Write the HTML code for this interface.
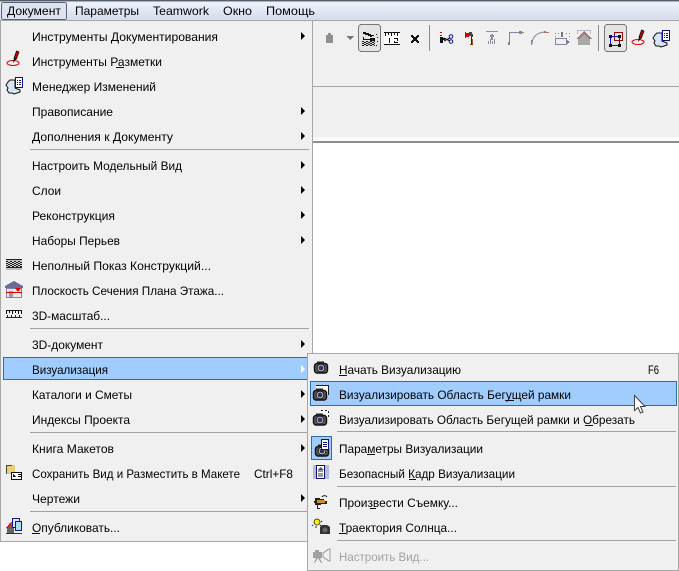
<!DOCTYPE html>
<html><head><meta charset="utf-8">
<style>
html,body{margin:0;padding:0;background:#fff;width:679px;height:571px;overflow:hidden}
svg{display:block}
text{font-family:"Liberation Sans","DejaVu Sans",sans-serif;font-size:12px;fill:#000}
.d{fill:#a2a2a2}
</style></head><body>
<svg width="679" height="571" viewBox="0 0 679 571" xmlns="http://www.w3.org/2000/svg" shape-rendering="crispEdges">
<defs>
<linearGradient id="bar" x1="0" y1="0" x2="0" y2="1"><stop offset="0" stop-color="#eef2fb"/><stop offset="1" stop-color="#d5dcef"/></linearGradient>
<pattern id="dith" width="4" height="2" patternUnits="userSpaceOnUse"><rect width="4" height="2" fill="#d0d0d0"/><rect x="0" y="0" width="2" height="1" fill="#222"/><rect x="2" y="1" width="2" height="1" fill="#222"/></pattern>
<g id="cam"><rect x="0.500" y="3.500" width="13" height="9.500" rx="2.500" fill="#555" stroke="#111" stroke-width="1.400" shape-rendering="auto"/><rect x="3" y="1.500" width="7" height="2.500" fill="#222"/><circle cx="7" cy="8" r="3.800" fill="#d8d8d8" stroke="#111" stroke-width=".8" shape-rendering="auto"/><circle cx="7" cy="8" r="2.500" fill="#2f3366" shape-rendering="auto"/></g>
<g id="note"><path d="M6 4h5v8l5 2v2l-3 1-3 1-2-1-3 0-2-3 1-2-2-3 2-3z" fill="#d6e6f8" stroke="#111" shape-rendering="auto"/><rect x="11" y="1" width="8" height="11" fill="#10107a"/><rect x="12" y="2" width="6" height="9" fill="#fff"/><path d="M13 4h1v1h-1zM15 4h2v1h-2zM13 6h1v1h-1zM15 6h2v1h-2zM13 8h1v1h-1zM15 8h2v1h-2z" fill="#10107a"/></g>
<g id="pen"><ellipse cx="7" cy="13" rx="6" ry="2.500" fill="none" stroke="#e00000" stroke-width="1" shape-rendering="auto"/><path d="M8 8l2.500-7 2.500 1-2.500 7z" fill="#c00000" stroke="#111" stroke-width=".7" shape-rendering="auto"/><path d="M8 8l-1 5 3.500-4z" fill="#111" shape-rendering="auto"/></g>
</defs>

<!-- top bar -->
<rect x="0" y="0" width="679" height="1" fill="#56606c"/>
<rect x="0" y="1" width="679" height="1" fill="#a8b0bc"/>
<rect x="0" y="2" width="679" height="18" fill="url(#bar)"/>
<rect x="0" y="20" width="679" height="1" fill="#a6a6a6"/>
<rect x="1.500" y="2.500" width="65" height="17" rx="2" fill="#dde3f1" stroke="#59626e"/>
<text x="7" y="15" textLength="54" lengthAdjust="spacingAndGlyphs">Документ</text>
<text x="75" y="15" textLength="64" lengthAdjust="spacingAndGlyphs">Параметры</text>
<text x="153" y="15" textLength="56" lengthAdjust="spacingAndGlyphs">Teamwork</text>
<text x="223" y="15" textLength="29" lengthAdjust="spacingAndGlyphs">Окно</text>
<text x="266" y="15" textLength="49" lengthAdjust="spacingAndGlyphs">Помощь</text>

<!-- toolbar -->
<rect x="313" y="21" width="366" height="116" fill="#f0f0f0"/>
<rect x="313" y="86" width="366" height="1" fill="#a8a8a8"/>
<rect x="313" y="137" width="366" height="4" fill="#fbfbfb"/>
<rect x="313" y="141" width="366" height="2" fill="#8e8e8e"/>

<path d="M328 33h3v2h2v8h-7v-8h2z" fill="#8f8f8f"/>
<path d="M346 36h8l-4 4z" fill="#777"/>
<rect x="358.500" y="24.500" width="22" height="27" rx="3" fill="#e4e4e4" stroke="#777"/>
<path d="M363 32h3v1h3v1h2v1h3v1h-2v1h-2v-1h-2v-1h-3v-1h-2zM363 37h1v2h6v1h-7zM370 38h5v4h-5zM376 34h1v1h-1zM377 37h1v1h-1zM377 41h1v1h-1zM376 45h1v1h-1z" fill="#111"/>
<rect x="362" y="41" width="13" height="5" fill="url(#dith)"/>
<rect x="384" y="32" width="16" height="13" fill="#fff"/><path d="M384 32h16v1h-16zM384 44h16v1h-16zM385 33h1v3h-1zM388 33h1v2h-1zM391 33h1v3h-1zM394 33h1v2h-1zM397 33h1v3h-1zM389 38h1v5h-1zM394 38h4v1h-4zM397 39h1v2h-1zM394 41h1v2h-1zM394 42h4v1h-4z" fill="#111"/>
<path d="M411 35h2v1h1v1h2v-1h1v-1h2v2h-1v1h-1v2h1v1h1v2h-2v-1h-1v-1h-2v1h-1v1h-2v-2h1v-1h1v-2h-1v-1h-1z" fill="#111"/>
<rect x="429" y="25" width="1" height="26" fill="#8a8a8a"/>
<g><path d="M440 32h2v1h-2zM440 35h2v1h-2z" fill="#e00000"/><path d="M440 37h3v1h2v2h-2v3h-3z" fill="#111"/><path d="M444 38l6 3M444 41l6-3" stroke="#111" fill="none" shape-rendering="auto"/><circle cx="451" cy="36.500" r="1.800" fill="none" stroke="#14149a" shape-rendering="auto"/><circle cx="451" cy="41.500" r="1.800" fill="none" stroke="#14149a" shape-rendering="auto"/></g>
<g><path d="M465 32h1v1h3v1h2v2h-2v1h-3v1h-1z" fill="#e00000"/><path d="M469 32h3v2h1v3h-2v-1h-2z" fill="#444"/><rect x="471" y="37" width="1" height="8" fill="#222"/><rect x="472" y="39" width="1" height="6" fill="#a05a10"/><rect x="470" y="44" width="3" height="1" fill="#7a3b10"/></g>
<g fill="#8f8f9f"><path d="M486 31h12v1h-12zM491 34h2v1h1v2h-1v3h-2v-3h-1v-2h1z"/><path d="M488 41h1v3h-1zM490 39h1v5h-1zM492 41h1v3h-1zM494 39h1v5h-1z"/></g>
<g><path d="M509 32h10v1h-9v12h-1z" fill="#8484a0"/><path d="M508 42h2v3h-2zM519 31h3v3h-3z" fill="#a07878"/><path d="M521 32h3v1h-3z" fill="#a07878"/></g>
<g><path d="M532 44c0-6 4-12 14-12" fill="none" stroke="#8484a0" shape-rendering="auto"/><path d="M531 40h1v5h-1zM544 31h2v2h-2zM546 32h3v1h-3z" fill="#a07878"/></g>
<g><path d="M555 33h1v1h-1zM558 33h1v1h-1zM566 33h1v1h-1zM569 33h1v1h-1zM555 36h1v1h-1zM569 36h1v1h-1z" fill="#8a8a9a"/><rect x="561" y="32" width="2" height="5" fill="#777"/><rect x="555.500" y="38.500" width="11" height="6" fill="none" stroke="#8484a0"/><path d="M567 40l3 2-3 2z" fill="#777"/></g>
<g><path d="M577 30h14v1h-14zM577 31h1v3h-1zM590 31h1v3h-1z" fill="#b8b8c8"/><path d="M584 31l8 8h-2v6h-12v-6h-2z" fill="#a8a8a8"/><path d="M584 31l8 8h-3l-5-5-5 5h-3z" fill="#a07878"/></g>
<rect x="598" y="25" width="1" height="26" fill="#8a8a8a"/>
<rect x="604.500" y="24.500" width="22" height="27" rx="3" fill="#e4e4e4" stroke="#777"/>
<rect x="614.500" y="32.500" width="8" height="8" fill="none" stroke="#8a1010"/>
<rect x="610.500" y="36.500" width="9" height="9" fill="none" stroke="#1010f0"/>
<path d="M609 35h3v3h-3zM618 35h3v3h-3zM609 44h3v3h-3zM618 44h3v3h-3z" fill="#111"/>
<use href="#pen" x="631" y="29"/>
<use href="#note" x="651" y="29"/>

<!-- main menu -->
<rect x="0" y="21" width="313" height="521" fill="#a6a6a6"/>
<rect x="1" y="21" width="311" height="520" fill="#f0f0f0"/>
<rect x="312" y="21" width="1" height="130" fill="#a6a6a6"/>

<rect x="3.500" y="357.500" width="304" height="22" fill="#a0cdfd" stroke="#2b6fa8"/>

<g fill="#a2a2a2">
<rect x="30" y="149" width="279" height="1"/>
<rect x="30" y="328" width="279" height="1"/>
<rect x="30" y="432" width="279" height="1"/>
<rect x="30" y="511" width="279" height="1"/>
</g>

<text x="32" y="41" textLength="186" lengthAdjust="spacingAndGlyphs">Инструменты Документирования</text>
<text x="32" y="66" textLength="130" lengthAdjust="spacingAndGlyphs">Инструменты Разметки</text>
<text x="32" y="91" textLength="124" lengthAdjust="spacingAndGlyphs">Менеджер Изменений</text>
<text x="32" y="116" textLength="81" lengthAdjust="spacingAndGlyphs">Правописание</text>
<text x="32" y="141" textLength="141" lengthAdjust="spacingAndGlyphs">Дополнения к Документу</text>
<text x="32" y="170" textLength="150" lengthAdjust="spacingAndGlyphs">Настроить Модельный Вид</text>
<text x="32" y="195" textLength="29" lengthAdjust="spacingAndGlyphs">Слои</text>
<text x="32" y="220" textLength="83" lengthAdjust="spacingAndGlyphs">Реконструкция</text>
<text x="32" y="245" textLength="88" lengthAdjust="spacingAndGlyphs">Наборы Перьев</text>
<text x="32" y="270" textLength="179" lengthAdjust="spacingAndGlyphs">Неполный Показ Конструкций...</text>
<text x="32" y="295" textLength="192" lengthAdjust="spacingAndGlyphs">Плоскость Сечения Плана Этажа...</text>
<text x="32" y="320" textLength="78" lengthAdjust="spacingAndGlyphs">3D-масштаб...</text>
<text x="32" y="349" textLength="71" lengthAdjust="spacingAndGlyphs">3D-документ</text>
<text x="32" y="374" textLength="76" lengthAdjust="spacingAndGlyphs">Визуализация</text>
<text x="32" y="399" textLength="100" lengthAdjust="spacingAndGlyphs">Каталоги и Сметы</text>
<text x="32" y="424" textLength="98" lengthAdjust="spacingAndGlyphs">Индексы Проекта</text>
<text x="32" y="453" textLength="82" lengthAdjust="spacingAndGlyphs">Книга Макетов</text>
<text x="32" y="478" textLength="208" lengthAdjust="spacingAndGlyphs">Сохранить Вид и Разместить в Макете</text>
<text x="254" y="478" textLength="39" lengthAdjust="spacingAndGlyphs">Ctrl+F8</text>
<text x="32" y="503" textLength="48" lengthAdjust="spacingAndGlyphs">Чертежи</text>
<text x="32" y="532" textLength="88" lengthAdjust="spacingAndGlyphs">Опубликовать...</text>

<!-- underlines -->
<g fill="#101010">
<rect x="116" y="67" width="8" height="1"/>
<rect x="32" y="533" width="8" height="1"/>
</g>

<!-- arrows -->
<g fill="#000" shape-rendering="auto">
<path d="M301 32l4 4-4 4zM301 107l4 4-4 4zM301 132l4 4-4 4zM301 161l4 4-4 4zM301 186l4 4-4 4zM301 211l4 4-4 4zM301 236l4 4-4 4zM301 340l4 4-4 4zM301 390l4 4-4 4zM301 415l4 4-4 4zM301 444l4 4-4 4zM301 494l4 4-4 4z"/>
<path d="M301 365l4 4-4 4z" fill="#fff"/>
</g>

<!-- left icons -->
<use href="#pen" x="6" y="50"/>
<use href="#note" x="4" y="76"/>
<g>
<rect x="6" y="259" width="16" height="1" fill="#222"/>
<rect x="6" y="260" width="16" height="1" fill="#bbb"/>
<rect x="6" y="261" width="16" height="6" fill="url(#dith)"/>
<rect x="6" y="267" width="16" height="1" fill="#222"/>
<rect x="6" y="268" width="16" height="2" fill="#c0c0c0"/>
</g>
<g>
<path d="M14 281l9 5v2h-18v-2z" fill="#6b6b9a"/>
<rect x="6.500" y="288.500" width="15" height="9" fill="#e8e8f0" stroke="#8484b4"/>
<rect x="9" y="291" width="4" height="6" fill="#999"/>
<rect x="6" y="292" width="16" height="1" fill="#e00000"/>
<path d="M15 288h6l-3 4z" fill="#e00000"/>
</g>
<g>
<path d="M6 310h16v1h-16zM6 311h1v3h-1zM9 311h1v2h-1zM12 311h1v3h-1zM15 311h1v2h-1zM18 311h1v3h-1zM21 311h1v3h-1z" fill="#111"/>
<path d="M6 317h16v1h-16zM7 315h1v2h-1zM11 315h1v2h-1zM15 315h1v2h-1zM19 315h1v2h-1z" fill="#1414b4"/>
</g>
<g>
<rect x="6" y="465" width="9" height="9" fill="#e8d070"/>
<path d="M6 465h6v1h-6zM6 465h1v9h-1z" fill="#444"/>
<rect x="11.500" y="472.500" width="10" height="7" fill="#fff" stroke="#111"/>
<path d="M13 474l3 3h-3zM18 474h3v1h-3zM18 476h3v1h-3z" fill="#111"/>
</g>
<g>
<path d="M7 528l4-4 3 3v6h-7z" fill="#666"/>
<path d="M6 528l5-6 1 1-5 6z" fill="#e00000"/>
<rect x="12.500" y="518.500" width="7" height="9" fill="#dfe8ff" stroke="#14149a"/>
<rect x="15.500" y="521.500" width="6" height="9" fill="#a8e0f0" stroke="#14149a"/>
<rect x="6" y="533" width="16" height="1" fill="#333"/>
</g>

<!-- submenu -->
<rect x="307" y="353" width="372" height="218" fill="#a6a6a6"/>
<rect x="308" y="354" width="370" height="216" fill="#f0f0f0"/>
<rect x="310.500" y="381.500" width="366" height="24" fill="#a0cdfd" stroke="#2b6fa8"/>
<rect x="311.500" y="436.500" width="20" height="23" fill="#a0cdfd" stroke="#2b6fa8"/>
<g fill="#a2a2a2">
<rect x="337" y="431" width="339" height="1"/>
<rect x="337" y="486" width="339" height="1"/>
<rect x="337" y="540" width="339" height="1"/>
</g>

<text x="339" y="374" textLength="122" lengthAdjust="spacingAndGlyphs">Начать Визуализацию</text>
<text x="648" y="374" textLength="11" lengthAdjust="spacingAndGlyphs">F6</text>
<text x="339" y="399" textLength="232" lengthAdjust="spacingAndGlyphs">Визуализировать Область Бегущей рамки</text>
<text x="339" y="424" textLength="296" lengthAdjust="spacingAndGlyphs">Визуализировать Область Бегущей рамки и Обрезать</text>
<text x="339" y="453" textLength="144" lengthAdjust="spacingAndGlyphs">Параметры Визуализации</text>
<text x="339" y="478" textLength="176" lengthAdjust="spacingAndGlyphs">Безопасный Кадр Визуализации</text>
<text x="339" y="507" textLength="119" lengthAdjust="spacingAndGlyphs">Произвести Съемку...</text>
<text x="339" y="532" textLength="118" lengthAdjust="spacingAndGlyphs">Траектория Солнца...</text>
<text x="339" y="561" textLength="90" lengthAdjust="spacingAndGlyphs" class="d">Настроить Вид...</text>

<g fill="#101010">
<rect x="339" y="375" width="8" height="1"/>
<rect x="505" y="400" width="9" height="1"/>
<rect x="585" y="425" width="8" height="1"/>
<rect x="367" y="454" width="8" height="1"/>
<rect x="409" y="479" width="7" height="1"/>
<rect x="370" y="508" width="6" height="1"/>
<rect x="339" y="533" width="7" height="1"/>
</g>

<!-- submenu icons -->
<use href="#cam" x="314" y="360"/>
<rect x="316" y="385" width="13" height="10" fill="#fff"/><path d="M316 385h13v1h-13zM328 385h1v10h-1z" fill="#222"/>
<use href="#cam" x="313" y="387"/>
<path d="M321 410h8v8h-3v-4h-5z" fill="#fff"/><path d="M321 410h2v1h-2zM325 410h2v1h-2zM328 411h1v2h-1zM328 415h1v2h-1z" fill="#222"/>
<use href="#cam" x="313" y="412"/>
<use href="#cam" x="315" y="443"/>
<rect x="321" y="439" width="8" height="11" fill="#10107a"/><rect x="322" y="440" width="6" height="9" fill="#fff"/><path d="M323 442h4v1h-4zM323 444h4v1h-4zM323 446h4v1h-4z" fill="#10107a"/>
<rect x="313" y="465" width="16" height="14" fill="#b8bcd8"/>
<rect x="316" y="465" width="9" height="14" fill="#10107a"/>
<rect x="317" y="466" width="7" height="12" fill="#fff"/>
<path d="M320.500 467l3 3h-6z" fill="#555"/><rect x="318" y="470" width="5" height="7" fill="#999"/><rect x="318" y="472" width="5" height="1" fill="#fff"/>
<g><path d="M315 498h5v1h4v2h3v3h-6v1h-3v3h2v1h-3v-4h-2v-2h-1v-2h1z" fill="#222"/><rect x="317" y="500" width="8" height="3" fill="#c89030"/><path d="M322 497a3 3 0 0 1 5 0" fill="none" stroke="#222" shape-rendering="auto"/></g>
<g shape-rendering="auto"><circle cx="317" cy="522" r="3" fill="#f8f000" stroke="#222" stroke-width=".8"/><path d="M321 521l1 1M320 525l1 1M316 526v2M313 525l-1 1" stroke="#222" fill="none"/><path d="M322 525h5l3 2v7h-10v-7z" fill="#333"/><circle cx="325" cy="530" r="2.500" fill="#667"/></g>
<g fill="#a0a0a0"><path d="M313 552h9v6h-9zM315 550h4v2h-4z"/><path d="M323 553l6-4h1v12h-1l-6-4z" fill="none" stroke="#a0a0a0"/><path d="M316 558h2l-3 5h-1zM318 558h2l2 5h-1z"/></g>

<!-- cursor -->
<g shape-rendering="auto"><path d="M634.500 395.500v15l3.500-3 2.500 5.500 2.500-1-2.500-5.500h4.500z" fill="#fff" stroke="#444" stroke-width="1"/></g>
</svg>
</body></html>
